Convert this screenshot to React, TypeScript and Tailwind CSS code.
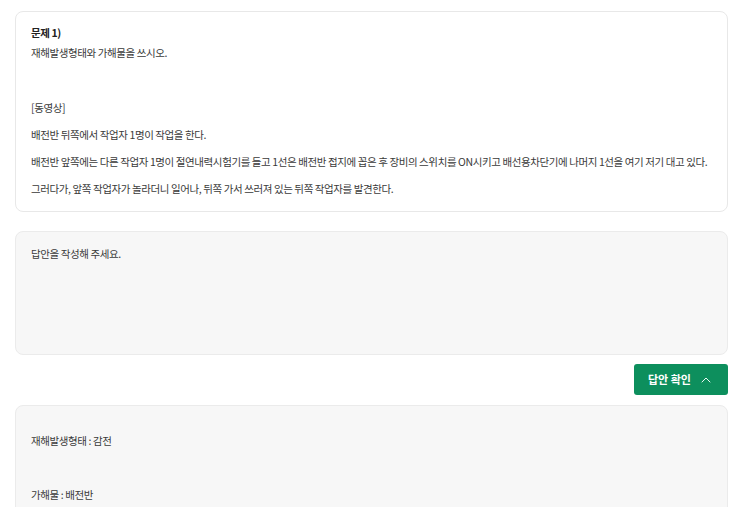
import { ChevronUp } from "lucide-react";

const font = "font-['Noto_Sans_CJK_KR','Noto_Sans',sans-serif]";

export default function App() {
  return (
    <div className={`${font} min-h-screen bg-white px-[15px] pt-[11px] text-[10.5px] tracking-[-0.4px] text-[#3a3a3a]`}>
      <div className="rounded-lg border border-[#e8e8e8] bg-white px-[15px] pt-[11px] pb-[9px]">
        <div className="leading-[20px]">
          <div className="font-bold text-[#222]">문제 1)</div>
          <div>재해발생형태와 가해물을 쓰시오.</div>
        </div>
        <div className="h-[31px]" />
        <div className="leading-[27px]">
          <p>[동영상]</p>
          <p>배전반 뒤쪽에서 작업자 1명이 작업을 한다.</p>
          <p className="whitespace-nowrap">
            배전반 앞쪽에는 다른 작업자 1명이 절연내력시험기를 들고 1선은 배전반 접지에 꼽은 후 장비의 스위치를 ON시키고 배선용차단기에 나머지 1선을 여기 저기 대고 있다.
          </p>
          <p>그러다가, 앞쪽 작업자가 놀라더니 일어나, 뒤쪽 가서 쓰러져 있는 뒤쪽 작업자를 발견한다.</p>
        </div>
      </div>

      <div className="mt-[19px] h-[124px] rounded-lg border border-[#ebebeb] bg-[#f7f7f7] px-[15px] pt-[12px] leading-[20px]">
        답안을 작성해 주세요.
      </div>

      <div className="mt-[9px] flex justify-end">
        <button className="flex h-[31px] w-[94px] items-center justify-center gap-[7px] rounded-[3px] bg-[#0d8f5d] text-[11px] font-bold tracking-normal text-white">
          <span>답안 확인</span>
          <ChevronUp size={16} strokeWidth={1.4} />
        </button>
      </div>

      <div className="mt-[10px] h-[140px] rounded-t-lg border border-[#ebebeb] bg-[#f7f7f7] px-[15px] pt-[21px] leading-[27px]">
        <p>재해발생형태 : 감전</p>
        <p className="h-[27px]" />
        <p>가해물 : 배전반</p>
      </div>
    </div>
  );
}
